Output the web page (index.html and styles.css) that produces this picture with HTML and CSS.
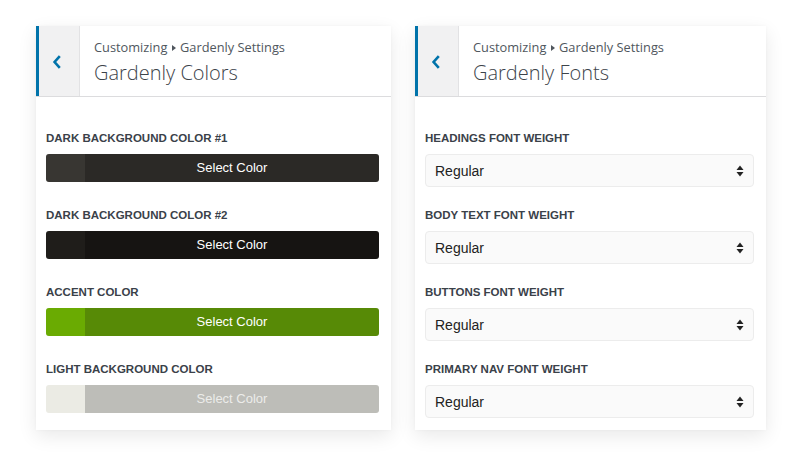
FILE: index.html
```html
<!DOCTYPE html>
<html lang="en">
<head>
    <meta charset="UTF-8">
    <meta name="viewport" content="width=device-width, initial-scale=1.0">
    <title>Gardenly Customizer</title>
    <link rel="stylesheet" href="styles.css">
</head>
<body>
    <div class="wrap">
        <!-- colors panel -->
        <div class="panel panel-colors">
            <div class="head">
                <div class="back">
                    <svg width="10" height="14" viewBox="0 0 10 14"><polyline points="7.8,1.2 2.6,7 7.8,12.8" fill="none" stroke="#0073aa" stroke-width="2.6"/></svg>
                </div>
                <div class="titles">
                    <div class="crumb">Customizing <span class="tri"></span> Gardenly Settings</div>
                    <div class="title">Gardenly Colors</div>
                </div>
            </div>
            <div class="body">
                <div class="field">
                    <div class="label">Dark Background Color #1</div>
                    <div class="color-btn dark1">
                        <span class="swatch"></span>
                        <span class="btn-text">Select Color</span>
                    </div>
                </div>
                <div class="field">
                    <div class="label">Dark Background Color #2</div>
                    <div class="color-btn dark2">
                        <span class="swatch"></span>
                        <span class="btn-text">Select Color</span>
                    </div>
                </div>
                <div class="field">
                    <div class="label">Accent Color</div>
                    <div class="color-btn accent">
                        <span class="swatch"></span>
                        <span class="btn-text">Select Color</span>
                    </div>
                </div>
                <div class="field">
                    <div class="label">Light Background Color</div>
                    <div class="color-btn light">
                        <span class="swatch"></span>
                        <span class="btn-text">Select Color</span>
                    </div>
                </div>
            </div>
        </div>

        <!-- fonts panel -->
        <div class="panel panel-fonts">
            <div class="head">
                <div class="back">
                    <svg width="10" height="14" viewBox="0 0 10 14"><polyline points="7.8,1.2 2.6,7 7.8,12.8" fill="none" stroke="#0073aa" stroke-width="2.6"/></svg>
                </div>
                <div class="titles">
                    <div class="crumb">Customizing <span class="tri"></span> Gardenly Settings</div>
                    <div class="title">Gardenly Fonts</div>
                </div>
            </div>
            <div class="body">
                <div class="field">
                    <div class="label">Headings Font Weight</div>
                    <div class="select">
                        <span>Regular</span>
                        <svg class="arrows" width="8" height="12" viewBox="0 0 8 12"><polygon points="4,0.5 7.5,5 0.5,5" fill="#222"/><polygon points="0.5,7 7.5,7 4,11.5" fill="#222"/></svg>
                    </div>
                </div>
                <div class="field">
                    <div class="label">Body Text Font Weight</div>
                    <div class="select">
                        <span>Regular</span>
                        <svg class="arrows" width="8" height="12" viewBox="0 0 8 12"><polygon points="4,0.5 7.5,5 0.5,5" fill="#222"/><polygon points="0.5,7 7.5,7 4,11.5" fill="#222"/></svg>
                    </div>
                </div>
                <div class="field">
                    <div class="label">Buttons Font Weight</div>
                    <div class="select">
                        <span>Regular</span>
                        <svg class="arrows" width="8" height="12" viewBox="0 0 8 12"><polygon points="4,0.5 7.5,5 0.5,5" fill="#222"/><polygon points="0.5,7 7.5,7 4,11.5" fill="#222"/></svg>
                    </div>
                </div>
                <div class="field">
                    <div class="label">Primary Nav Font Weight</div>
                    <div class="select">
                        <span>Regular</span>
                        <svg class="arrows" width="8" height="12" viewBox="0 0 8 12"><polygon points="4,0.5 7.5,5 0.5,5" fill="#222"/><polygon points="0.5,7 7.5,7 4,11.5" fill="#222"/></svg>
                    </div>
                </div>
            </div>
        </div>
    </div>
</body>
</html>
```
FILE: styles.css
```css
*{
    margin: 0;
    padding: 0;
    box-sizing: border-box;
}
html, body{
    height: 100%;
}
body{
    background: #fff;
    font-family: "Liberation Sans", Arial, sans-serif;
    color: #23282d;
}
.wrap{
    display: flex;
    align-items: flex-start;
    gap: 24px;
    min-height: 100%;
    padding: 26px 0 0 36px;
}
.panel{
    background: #fff;
    box-shadow: 0 6px 18px rgba(0,0,0,0.09), 0 0 4px rgba(0,0,0,0.03);
}
.panel-colors{
    width: 355px;
}
.panel-fonts{
    width: 351px;
}

/* header */
.head{
    display: flex;
    height: 71px;
    border-bottom: 1px solid #dcdcde;
}
.back{
    width: 44px;
    display: flex;
    align-items: center;
    justify-content: center;
    background: #f1f1f2;
    border-left: 3px solid #0073aa;
    border-right: 1px solid #e2e2e4;
    padding: 1px 4px 0 0;
}
.titles{
    padding: 13px 0 0 14px;
    font-family: "Open Sans", "Liberation Sans", sans-serif;
}
.crumb{
    font-size: 12.8px;
    line-height: 16px;
    color: #50575e;
}
.tri{
    display: inline-block;
    width: 0;
    height: 0;
    border-top: 3.5px solid transparent;
    border-bottom: 3.5px solid transparent;
    border-left: 4px solid #50575e;
    margin: 0 1px 1px 1px;
}
.title{
    font-size: 20px;
    font-weight: 300;
    line-height: 26px;
    margin-top: 5px;
    color: #3c434a;
}

/* body */
.body{
    padding: 33px 12px 17px 10px;
}
.panel-fonts .body{
    padding-bottom: 12px;
}
.field + .field{
    margin-top: 25px;
}
.panel-fonts .field + .field{
    margin-top: 20px;
}
.label{
    font-size: 11.5px;
    font-weight: bold;
    line-height: 16px;
    text-transform: uppercase;
    color: #3a4149;
    margin-bottom: 8px;
}

/* color buttons */
.color-btn{
    display: flex;
    height: 28px;
    border-radius: 3px;
    overflow: hidden;
    box-shadow: inset 0 0 0 1px rgba(0,0,0,0.12);
}
.swatch{
    width: 39px;
}
.btn-text{
    flex: 1;
    text-align: center;
    font-size: 13px;
    line-height: 28px;
    color: #fff;
}
.dark1 .swatch{ background: #383632; }
.dark1 .btn-text{ background: #2b2926; }
.dark2 .swatch{ background: #1f1d1a; }
.dark2 .btn-text{ background: #161412; }
.accent .swatch{ background: #6aab02; }
.accent .btn-text{ background: #578a06; }
.light{ box-shadow: none; }
.light .swatch{ background: #ebebe4; }
.light .btn-text{ background: #bdbdb8; color: #ececea; }

/* selects */
.select{
    display: flex;
    align-items: center;
    justify-content: space-between;
    height: 33px;
    padding: 0 9px 0 9px;
    background: #fafafa;
    border: 1px solid #ececec;
    border-radius: 4px;
    font-size: 14px;
    color: #222;
}
.arrows{
    display: block;
}
```
